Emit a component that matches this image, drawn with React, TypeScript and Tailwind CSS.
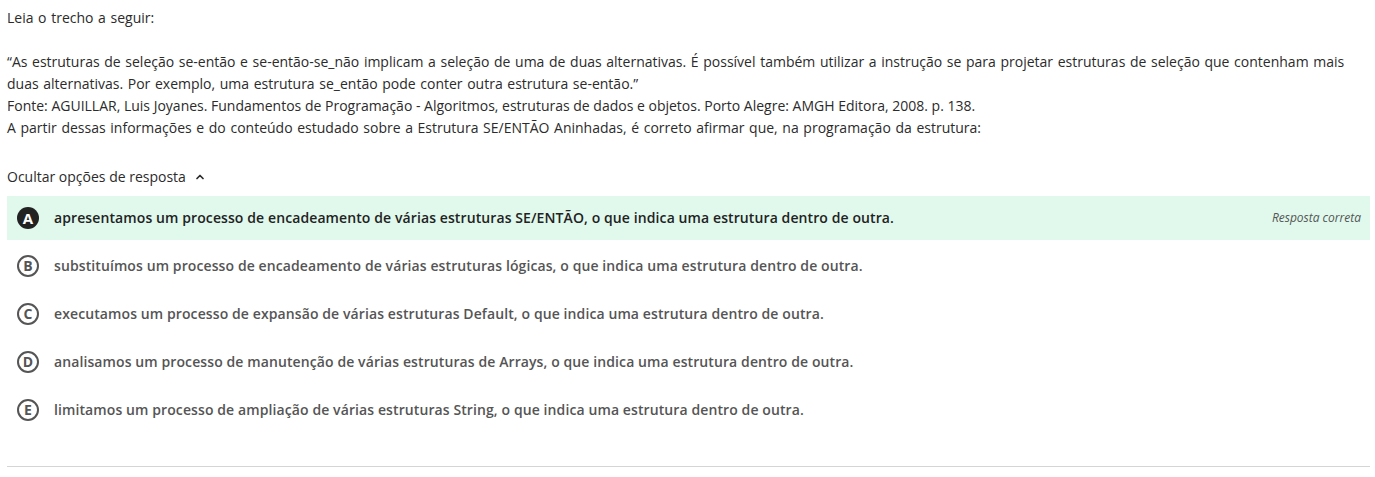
import { ChevronUp } from "lucide-react";

const options = [
  { letter: "A", text: "apresentamos um processo de encadeamento de várias estruturas SE/ENTÃO, o que indica uma estrutura dentro de outra.", correct: true },
  { letter: "B", text: "substituímos um processo de encadeamento de várias estruturas lógicas, o que indica uma estrutura dentro de outra." },
  { letter: "C", text: "executamos um processo de expansão de várias estruturas Default, o que indica uma estrutura dentro de outra." },
  { letter: "D", text: "analisamos um processo de manutenção de várias estruturas de Arrays, o que indica uma estrutura dentro de outra." },
  { letter: "E", text: "limitamos um processo de ampliação de várias estruturas String, o que indica uma estrutura dentro de outra." },
];

export default function App() {
  return (
    <div className="min-h-[477px] bg-white pl-[7px] pr-[5px] pt-[7px] font-['Open_Sans',sans-serif] text-[14px] leading-[22px] text-[#2b2b2b]">
      {/* Enunciado */}
      <p className="[word-spacing:1px]">Leia o trecho a seguir:</p>
      <p className="h-[22px]"></p>
      <p className="[word-spacing:1px]">
        “As estruturas de seleção se-então e se-então-se_não implicam a seleção de uma de duas alternativas. É possível também utilizar a instrução se para projetar estruturas de seleção que contenham mais duas alternativas. Por exemplo, uma estrutura se_então pode conter outra estrutura se-então.”
      </p>
      <p>Fonte: AGUILLAR, Luis Joyanes. Fundamentos de Programação - Algoritmos, estruturas de dados e objetos. Porto Alegre: AMGH Editora, 2008. p. 138.</p>
      <p className="[word-spacing:1px]">A partir dessas informações e do conteúdo estudado sobre a Estrutura SE/ENTÃO Aninhadas, é correto afirmar que, na programação da estrutura:</p>

      {/* Toggle */}
      <button className="mt-[27px] flex items-center gap-[8px] text-[14px] text-[#2b2b2b]">
        <span>Ocultar opções de resposta</span>
        <ChevronUp className="h-3 w-3" strokeWidth={3.5} />
      </button>

      {/* Alternativas */}
      <div className="mt-[8px] flex flex-col gap-[4px]">
        {options.map((o) => (
          <div
            key={o.letter}
            className={`flex h-[44px] items-center pl-[10px] pr-[9px] ${o.correct ? "bg-[#e0f9ec]" : ""}`}
          >
            {o.correct ? (
              <span className="flex h-[22px] w-[22px] items-center justify-center rounded-full bg-[#222] text-[15px] font-bold leading-none text-white">
                {o.letter}
              </span>
            ) : (
              <span className="flex h-[22px] w-[22px] items-center justify-center rounded-full border-2 border-[#555] text-[14px] font-bold leading-none text-[#555]">
                {o.letter}
              </span>
            )}
            <span className={`ml-[15px] flex-1 text-[14px] font-semibold tracking-[0.1px] ${o.correct ? "text-[#222]" : "text-[#555]"}`}>
              {o.text}
            </span>
            {o.correct && <span className="text-[12px] italic text-[#555]">Resposta correta</span>}
          </div>
        ))}
      </div>

      <div className="mt-[34px] border-t border-[#d5d5d5]"></div>
    </div>
  );
}
